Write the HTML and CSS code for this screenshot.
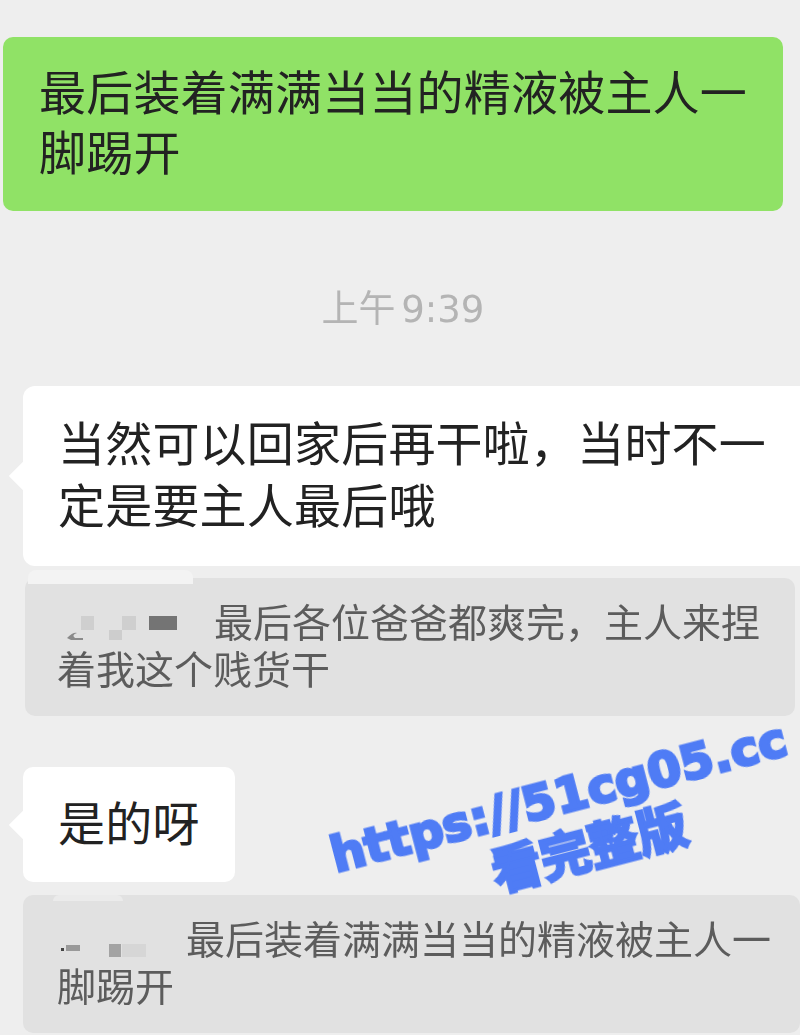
FILE: index.html
```html
<html>
<head>
    <title>聊天记录</title>
    <meta charset="UTF-8">
    <link rel="stylesheet" href="styles.css">
</head>
<body>
    <div class="chat">
        <div class="bubble green">最后装着满满当当的精液被主人一脚踢开</div>

        <div class="time">上午 9:39</div>

        <div class="bubble white long">当然可以回家后再干啦，当时不一定是要主人最后哦</div>
        <div class="quote first">
            <svg class="names names-a" width="157" height="47" viewBox="0 0 157 47">
                <rect x="24" y="16" width="13" height="14" fill="#cfcfcf"/>
                <path d="M10 38q6 -6 10 -5q-6 2 -2 5h8v2h-12z" fill="#8a8a8a"/>
                <rect x="52" y="30" width="13" height="10" fill="#cdcdcd"/>
                <rect x="65" y="16" width="14" height="14" fill="#cfcfcf"/>
                <rect x="92" y="16" width="28" height="14" fill="#747474"/>
            </svg>最后各位爸爸都爽完，主人来捏着我这个贱货干
        </div>

        <div class="bubble white short">是的呀</div>
        <div class="quote second">
            <svg class="names names-b" width="129" height="47" viewBox="0 0 129 47">
                <rect x="4" y="31" width="3" height="3" fill="#444"/>
                <rect x="9" y="28" width="14" height="6" fill="#999"/>
                <rect x="52" y="27" width="12" height="13" fill="#a3a3a3"/>
                <rect x="65" y="27" width="24" height="13" fill="#d6d6d6"/>
            </svg>最后装着满满当当的精液被主人一脚踢开
        </div>
    </div>

    <div class="stamp">
        <div class="stamp-url">https://51cg05.cc</div>
        <div class="stamp-cta">看完整版</div>
    </div>
</body>
</html>
```
FILE: styles.css
```css
:root {
    --page: #eeeeee;
    --green: #90e266;
    --quote: #e1e1e1;
    --text: #222;
    --text-quote: #5c5c5c;
    --stamp: #4f7cf5;
}

body {
    margin: 0;
    width: 800px;
    height: 1035px;
    overflow: hidden;
    position: relative;
    background: var(--page);
    font-family: "Liberation Sans", "Noto Sans CJK SC", sans-serif;
}

.chat {
    display: flex;
    flex-direction: column;
    padding-top: 37px;
    filter: blur(0.5px);
}

.bubble {
    box-sizing: border-box;
    font-size: 47px;
    letter-spacing: 0.2px;
    color: var(--text);
    border-radius: 10px;
}

.green {
    width: 780px;
    height: 174px;
    margin-left: 3px;
    padding: 27px 30px 26px 36px;
    line-height: 60px;
    background: var(--green);
}

.time {
    margin: 76px 0 53px;
    padding-left: 6px;
    text-align: center;
    font-family: "DejaVu Sans", "Noto Sans CJK SC", sans-serif;
    font-size: 37px;
    word-spacing: -6px;
    line-height: 46px;
    color: #b4b4b4;
}

.white {
    position: relative;
    margin-left: 23px;
    background: #fff;
}

/* little tail on the left of the bubble */
.white::before {
    content: "";
    position: absolute;
    left: -10px;
    top: 50%;
    width: 20px;
    height: 20px;
    margin-top: -10px;
    background: #fff;
    transform: rotate(45deg);
}

.long {
    width: 777px;
    height: 180px;
    padding: 28px 20px 28px 35px;
    line-height: 62px;
    border-radius: 12px 0 0 12px;
}

.short {
    width: 212px;
    height: 115px;
    margin-top: 51px;
    padding: 27px 20px 0 35px;
    line-height: 62px;
}

.quote {
    position: relative;
    box-sizing: border-box;
    font-size: 39px;
    line-height: 47px;
    color: var(--text-quote);
    background: var(--quote);
    border-radius: 10px;
}

/* pale smear along the top of the quote */
.quote::before {
    content: "";
    position: absolute;
    top: -8px;
    left: 3px;
    width: 165px;
    height: 14px;
    background: #f3f3f3;
    border-radius: 8px 8px 0 0;
}

.first {
    width: 770px;
    height: 138px;
    margin: 12px 0 0 25px;
    padding: 22px 30px 0 32px;
}

.second {
    width: 777px;
    height: 138px;
    margin: 13px 0 0 23px;
    padding: 22px 20px 0 34px;
}

.second::before {
    top: 0;
    left: 30px;
    width: 70px;
    height: 6px;
    background: #ebebeb;
}

.names {
    vertical-align: top;
}

.stamp {
    position: absolute;
    left: 325px;
    top: 768px;
    width: 480px;
    text-align: center;
    color: var(--stamp);
    transform: rotate(-14.6deg);
    font-weight: 700;
}

.stamp-url {
    font-family: "DejaVu Sans", sans-serif;
    font-size: 48px;
    line-height: 56px;
    white-space: nowrap;
    -webkit-text-stroke: 3px var(--stamp);
}

.stamp-cta {
    padding-left: 34px;
    font-family: "Noto Sans CJK SC", sans-serif;
    font-size: 50px;
    line-height: 52px;
    -webkit-text-stroke: 3px var(--stamp);
}
```
